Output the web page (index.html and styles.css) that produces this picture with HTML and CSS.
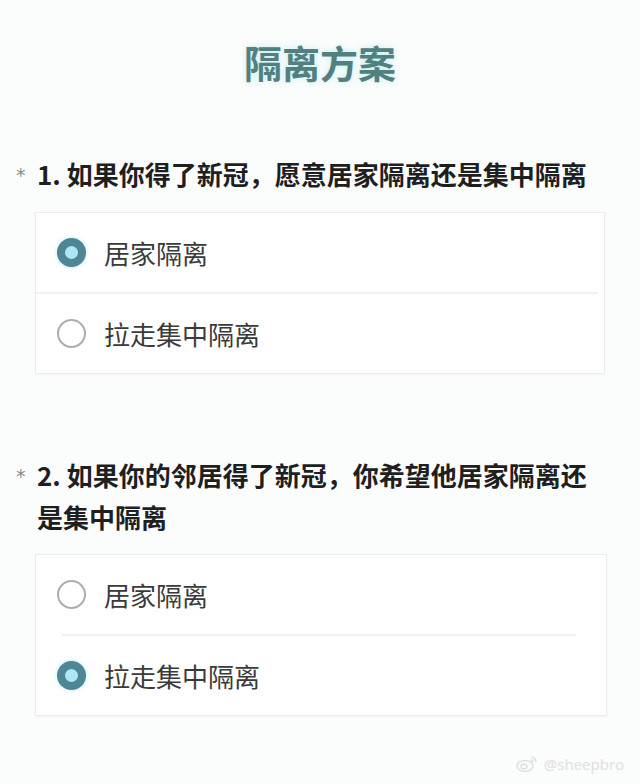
FILE: index.html
```html
<!DOCTYPE html>
<html lang="zh-CN">
<head>
<meta charset="utf-8">
<title>隔离方案</title>
<link rel="stylesheet" href="styles.css">
</head>
<body>
<main class="page">
  <h1 class="title">隔离方案</h1>

  <section class="question q1">
    <div class="q-head">
      <span class="req">*</span>
      <h2 class="q-text">1. 如果你得了新冠，愿意居家隔离还是集中隔离</h2>
    </div>
    <div class="card card-a">
      <label class="option">
        <span class="radio checked"></span>
        <span class="opt-text">居家隔离</span>
      </label>
      <div class="divider divider-full"></div>
      <label class="option">
        <span class="radio"></span>
        <span class="opt-text">拉走集中隔离</span>
      </label>
    </div>
  </section>

  <section class="question q2">
    <div class="q-head">
      <span class="req">*</span>
      <h2 class="q-text">2. 如果你的邻居得了新冠，你希望他居家隔离还是集中隔离</h2>
    </div>
    <div class="card card-b">
      <label class="option">
        <span class="radio"></span>
        <span class="opt-text">居家隔离</span>
      </label>
      <div class="divider divider-inset"></div>
      <label class="option">
        <span class="radio checked"></span>
        <span class="opt-text">拉走集中隔离</span>
      </label>
    </div>
  </section>

  <footer class="watermark">
    <svg class="wb-logo" width="22" height="18" viewBox="0 0 22 18" aria-hidden="true">
      <ellipse cx="9" cy="11" rx="8" ry="5.5" fill="none" stroke="#dedede" stroke-width="1.6"/>
      <ellipse cx="8" cy="11.5" rx="3" ry="2.2" fill="none" stroke="#dedede" stroke-width="1.4"/>
      <path d="M15 2 a5 5 0 0 1 5 5" fill="none" stroke="#dedede" stroke-width="1.6"/>
      <path d="M15 5 a2 2 0 0 1 2 2" fill="none" stroke="#dedede" stroke-width="1.4"/>
    </svg>
    <span class="wb-name">@sheepbro</span>
  </footer>
</main>
</body>
</html>
```
FILE: styles.css
```css
html, body {
  margin: 0;
  padding: 0;
  background: #fbfcfc;
}

body {
  font-family: "Noto Sans CJK SC", "Noto Sans", sans-serif;
  color: #222;
}

.page {
  width: 640px;
  height: 784px;
  box-sizing: border-box;
  padding-top: 38px;
  display: flex;
  flex-direction: column;
  position: relative;
  overflow: hidden;
}

.title {
  margin: 0;
  text-align: center;
  font-size: 38px;
  line-height: 48px;
  font-weight: 700;
  color: #52807f;
  text-shadow: 0 0 6px rgba(150, 225, 230, 0.55);
}

.question {
  display: flex;
  flex-direction: column;
}

.q1 {
  margin-top: 67px;
}

.q2 {
  margin-top: 80px;
}

.q-head {
  display: flex;
  align-items: flex-start;
  padding-left: 16px;
  padding-right: 38px;
}

.req {
  width: 21px;
  flex: none;
  font-size: 19px;
  line-height: 42px;
  color: #8c8c8c;
  font-family: "DejaVu Sans", sans-serif;
  transform: translateY(1px);
}

.q-text {
  margin: 0;
  font-size: 26px;
  line-height: 42px;
  font-weight: 700;
  color: #1f1f1f;
}

.card {
  margin: 17px 35px 0 35px;
  background: #ffffff;
  border: 1px solid #ececec;
  box-shadow: 0 1px 3px rgba(0, 0, 0, 0.04);
  display: flex;
  flex-direction: column;
}

.card-b {
  margin-top: 16px;
  margin-right: 33px;
}

.option {
  height: 79px;
  display: flex;
  align-items: center;
  padding-left: 21px;
  gap: 18px;
}

.radio {
  width: 29px;
  height: 29px;
  box-sizing: border-box;
  border-radius: 50%;
  border: 2px solid #adadad;
  background: #fff;
  flex: none;
}

.radio.checked {
  border: 8px solid #4e8696;
  background: #aee6f3;
  box-shadow: 0 0 4px rgba(120, 210, 230, 0.5);
}

.opt-text {
  font-size: 26px;
  line-height: 36px;
  font-weight: 400;
  color: #3a3a3a;
}

.divider {
  height: 2px;
  background: #f0f0f0;
}

.divider-full {
  margin: 0 6px 0 0;
}

.divider-inset {
  margin: 0 30px 0 26px;
}

.watermark {
  position: absolute;
  right: 16px;
  bottom: 10px;
  display: flex;
  align-items: center;
  gap: 6px;
}

.wb-name {
  font-size: 15px;
  color: #e0e0e0;
  font-family: "Noto Sans", sans-serif;
}
```
